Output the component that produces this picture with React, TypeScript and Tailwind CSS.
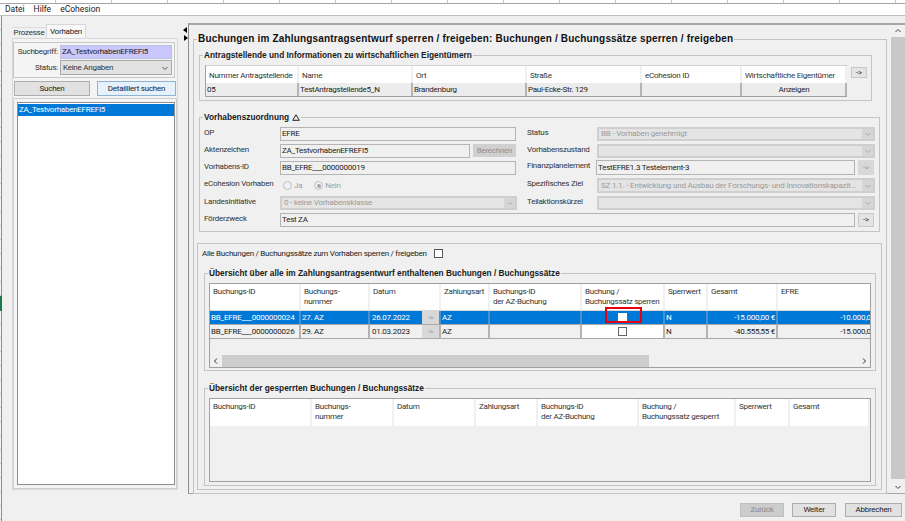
import type { ReactNode } from 'react'

const ticks = Array.from({ length: 17 })
const sideTicks = Array.from({ length: 36 })

const bookingCols = 'grid-cols-[91px_69px_71px_49px_92px_83px_43px_70px_103px]'
const lockedCols = 'grid-cols-[102px_82px_82px_62px_101px_97px_54px_80px]'

function Chevron({ dir = 'down', className = '' }: { dir?: 'down' | 'up' | 'left' | 'right'; className?: string }) {
  const d = {
    down: 'M1.5 3 L4 5.5 L6.5 3',
    up: 'M1.5 5 L4 2.5 L6.5 5',
    left: 'M5 1.5 L2.5 4 L5 6.5',
    right: 'M3 1.5 L5.5 4 L3 6.5',
  }[dir]
  return (
    <svg width="8" height="8" viewBox="0 0 8 8" className={`shrink-0 ${className}`}>
      <path d={d} fill="none" stroke="currentColor" strokeWidth="1" />
    </svg>
  )
}

function Box({
  legend,
  className = '',
  children,
}: {
  legend: ReactNode
  className?: string
  children: ReactNode
}) {
  return (
    <section className={`relative shrink-0 border border-[#c4c4c4] ${className}`}>
      <h3 className="absolute -top-[7px] left-[3px] whitespace-nowrap bg-[#f0f0f0] px-px font-['Liberation_Sans',Arial,sans-serif] text-[8.3px] font-bold leading-[12px] tracking-normal text-[#1a1a1a]">
        {legend}
      </h3>
      {children}
    </section>
  )
}

function Label({ children, className = 'w-[76px]' }: { children: ReactNode; className?: string }) {
  return <span className={`shrink-0 whitespace-nowrap leading-[11px] text-[#333] ${className}`}>{children}</span>
}

function Field({ value, className = '' }: { value?: string; className?: string }) {
  return (
    <div
      className={`flex items-center border border-[#b4b4b4] bg-[#f0f0f0] pl-[1px] leading-none text-[#222] ${className}`}
    >
      {value}
    </div>
  )
}

function Select({ value, className = '' }: { value?: string; className?: string }) {
  return (
    <div
      className={`flex items-center border-2 border-[#cfcfcf] bg-[#e4e4e4] leading-none text-[#9b9b9b] ${className}`}
    >
      <span className="min-w-0 flex-1 overflow-hidden whitespace-nowrap pl-[2px] tracking-[-0.18px]">{value}</span>
      <div className="flex h-full w-[11px] shrink-0 items-center justify-center bg-[#d6d6d6] text-[#aaa]">
        <Chevron />
      </div>
    </div>
  )
}

function ArrowButton({ className = '', disabled = false }: { className?: string; disabled?: boolean }) {
  return (
    <div
      className={`flex shrink-0 items-center justify-center border border-[#c8c8c8] leading-none ${
        disabled ? 'bg-[#d8d8d8] text-[#999]' : 'bg-[#e4e4e4] text-[#333]'
      } ${className}`}
    >
      -&gt;
    </div>
  )
}

function Radio({ checked = false, label }: { checked?: boolean; label: string }) {
  return (
    <span className="flex items-center gap-[2px] text-[#a0a0a0]">
      <span className="flex h-[9px] w-[9px] items-center justify-center rounded-full border border-[#c0c0c0] bg-[#f0f0f0]">
        {checked && <span className="h-[4px] w-[4px] rounded-full bg-[#a8a8a8]" />}
      </span>
      {label}
    </span>
  )
}

function HeadCell({ children, className = '' }: { children?: ReactNode; className?: string }) {
  return (
    <div
      className={`whitespace-pre border-r-2 border-[#f0f0f0] bg-white pl-[3px] pt-[3px] leading-[10px] text-[#333] ${className}`}
    >
      {children}
    </div>
  )
}

function RowCell({
  children,
  selected,
  className = '',
}: {
  children?: ReactNode
  selected: boolean
  className?: string
}) {
  return (
    <div
      className={`flex items-center overflow-hidden whitespace-nowrap border-r-2 pl-px leading-none ${
        selected ? 'border-[#4d8fcb] bg-[#0078d7] text-white' : 'border-[#b4b4b4] text-[#222]'
      } ${className}`}
    >
      {children}
    </div>
  )
}

function BookingRow({
  id,
  nr,
  date,
  total,
  efre,
  selected = false,
}: {
  id: string
  nr: string
  date: string
  total: string
  efre: string
  selected?: boolean
}) {
  return (
    <div className={`grid h-[14px] w-[671px] border-b border-[#a8a8a8] ${bookingCols}`}>
      <RowCell selected={selected} className="tracking-[-0.22px]">
        {id}
      </RowCell>
      <RowCell selected={selected}>{nr}</RowCell>
      <RowCell selected={selected} className="justify-between !pr-0">
        <span className="pl-[1px] pt-px">{date}</span>
        <ArrowButton disabled className="h-full w-[17px] !border-0" />
      </RowCell>
      <RowCell selected={selected}>AZ</RowCell>
      <RowCell selected={selected} />
      <div
        className={`relative flex items-center justify-center border-r-2 ${
          selected ? 'border-[#4d8fcb] bg-[#0078d7]' : 'border-[#b4b4b4] bg-white'
        }`}
      >
        <span className={`h-[9px] w-[9px] bg-white ${selected ? '' : 'border border-[#666]'}`} />
        {selected && <span className="absolute -top-[4px] left-[23px] h-[16px] w-[37px] border-2 border-[#e8000d]" />}
      </div>
      <RowCell selected={selected}>N</RowCell>
      <RowCell selected={selected} className="justify-end pr-[1px]">
        {total}
      </RowCell>
      <RowCell selected={selected} className="justify-end !border-r-0">
        {efre}
      </RowCell>
    </div>
  )
}

function DialogButton({ children, className = '' }: { children: ReactNode; className?: string }) {
  return (
    <div
      className={`flex h-[14px] items-center justify-center border border-[#adadad] bg-[#e1e1e1] leading-none text-[#222] ${className}`}
    >
      {children}
    </div>
  )
}

export default function App() {
  return (
    <div className="flex h-[521px] w-[905px] flex-col overflow-hidden bg-[#f0f0f0] font-['Roboto','Liberation_Sans',sans-serif] text-[8px] tracking-[-0.25px]">
      <div className="flex h-[4px] shrink-0 overflow-hidden border-b border-[#a6a6a6] bg-white">
        {ticks.map((_, i) => (
          <div key={i} className="h-full w-[56px] shrink-0 border-r border-[#c8c8c8]" />
        ))}
      </div>
      <nav className="flex h-[12px] shrink-0 items-center gap-[9px] border-b border-[#c0c0c0] bg-white pl-[5px] text-[8.5px] leading-none tracking-normal text-[#222]">
        <span>Datei</span>
        <span>Hilfe</span>
        <span>eCohesion</span>
      </nav>

      <div className="flex min-h-0 flex-1">
        <div className="relative flex h-full w-[2px] shrink-0 flex-col border-r border-[#8c8c8c] bg-[#f4f4f4]">
          {sideTicks.map((_, i) => (
            <div key={i} className="h-[14px] shrink-0 border-b border-[#c8c8c8]" />
          ))}
          <div className="absolute left-0 top-[280px] h-[15px] w-[2px] bg-[#1a7a4c]" />
        </div>

        <div className="flex min-w-0 flex-1 flex-col">
          <div className="flex h-[478px] shrink-0">
            {/* left pane */}
            <aside className="flex w-[180px] shrink-0 flex-col pl-[10px] pt-[9px]">
              <div className="flex h-[13px] shrink-0 items-end">
                <div className="flex h-[11px] w-[34px] items-center justify-center border-t border-[#ddd] bg-[#f0f0f0] leading-none text-[#333]">
                  Prozesse
                </div>
                <div className="flex h-[14px] w-[40px] items-center justify-center border-x border-t border-[#d8d8d8] bg-[#f8f8f8] leading-none text-[#222]">
                  Vorhaben
                </div>
              </div>
              <div className="flex h-[452px] w-[166px] flex-col border border-[#d8d8d8] bg-[#f4f4f4] pt-[3px]">
                <div className="flex h-[36px] w-[162px] shrink-0 flex-col gap-px border border-[#c8c8c8] py-[2px] pr-[2px]">
                  <div className="flex h-[14px] items-center">
                    <span className="w-[44px] text-right leading-none text-[#333]">Suchbegriff:</span>
                    <div className="ml-[2px] flex h-full flex-1 items-center border border-[#c0c0e0] bg-[#c9c7fb] pl-px leading-none text-[#222]">
                      ZA_TestvorhabenEFREFI5
                    </div>
                  </div>
                  <div className="flex h-[15px] items-center">
                    <span className="w-[44px] text-right leading-none text-[#333]">Status:</span>
                    <div className="ml-[2px] flex h-full flex-1 items-center justify-between border border-[#a8a8a8] bg-[#e1e1e1] px-[2px] leading-none text-[#333]">
                      Keine Angaben
                      <Chevron className="text-[#555]" />
                    </div>
                  </div>
                </div>
                <div className="mt-[3px] flex h-[15px] shrink-0 gap-[7px] pl-px">
                  <div className="flex w-[76px] items-center justify-center border border-[#adadad] bg-[#e1e1e1] leading-none text-[#222]">
                    Suchen
                  </div>
                  <div className="flex w-[79px] items-center justify-center border border-[#8fb4d0] bg-[#e5f1fb] leading-none text-[#222]">
                    Detailliert suchen
                  </div>
                </div>
                <div className="mt-[2px] flex h-[392px] w-[164px] flex-col border border-[#d0d0d0] p-[3px]">
                  <div className="flex h-full w-[158px] flex-col border border-[#8a8f96] bg-white pt-px">
                    <div className="flex h-[12px] items-center bg-[#0078d7] pl-px leading-none text-white">
                      ZA_TestvorhabenEFREFI5
                    </div>
                  </div>
                </div>
              </div>
            </aside>

            {/* splitter */}
            <div className="relative w-[6px] shrink-0">
              <span className="absolute left-[1px] top-[11px] h-0 w-0 border-y-[3px] border-r-[4px] border-y-transparent border-r-black" />
              <span className="absolute left-[2px] top-[19px] h-0 w-0 border-y-[3px] border-l-[4px] border-y-transparent border-l-black" />
            </div>

            {/* main frame */}
            <main className="mt-[7px] grid h-[471px] w-[717px] shrink-0 grid-cols-[702px_14px] border-b border-l border-t-2 border-[#a6a6a6] border-l-[#8c8c8c] bg-[#f0f0f0]">
              <div className="pl-[4px] pt-[14px]">
                <Box
                  className="h-[455px] w-[694px]"
                  legend={
                    <span className="text-[10px] tracking-[0.17px] text-[#111]">
                      Buchungen im Zahlungsantragsentwurf sperren / freigeben: Buchungen / Buchungssätze sperren / freigeben
                    </span>
                  }
                >
                  <Box
                    className="ml-[5px] mt-[15px] h-[46px] w-[673px]"
                    legend="Antragstellende und Informationen zu wirtschaftlichen Eigentümern"
                  >
                    <div className="ml-[5px] mt-[9px] flex items-start">
                      <div className="h-[32px] w-[642px] border border-[#a0a0a0] border-t-[#d0d0d0]">
                        <div className="grid h-[17px] grid-cols-[93px_114px_114px_115px_100px_105px] bg-white">
                          <HeadCell className="!pt-[5px]">Nummer Antragstellende</HeadCell>
                          <HeadCell className="!pt-[5px]">Name</HeadCell>
                          <HeadCell className="!pt-[5px]">Ort</HeadCell>
                          <HeadCell className="!pt-[5px]">Straße</HeadCell>
                          <HeadCell className="!pt-[5px]">eCohesion ID</HeadCell>
                          <HeadCell className="!pt-[5px]">Wirtschaftliche Eigentümer</HeadCell>
                        </div>
                        <div className="grid h-[13px] grid-cols-[93px_114px_114px_115px_100px_105px] bg-[#ececec]">
                          <RowCell selected={false}>05</RowCell>
                          <RowCell selected={false}>TestAntragstellende5_N</RowCell>
                          <RowCell selected={false}>Brandenburg</RowCell>
                          <RowCell selected={false}>Paul-Ecke-Str. 129</RowCell>
                          <RowCell selected={false} />
                          <RowCell selected={false} className="justify-center">
                            Anzeigen
                          </RowCell>
                        </div>
                      </div>
                      <ArrowButton className="ml-[4px] mt-[2px] h-[11px] w-[16px]" />
                    </div>
                  </Box>

                  <Box
                    className="ml-[5px] mt-[16px] h-[115px] w-[681px]"
                    legend={
                      <span className="flex items-center gap-[3px]">
                        Vorhabenszuordnung
                        <svg width="8" height="7" viewBox="0 0 8 7">
                          <path d="M4 .8 L7.3 6.3 H.7 Z" fill="none" stroke="#222" strokeWidth="1" />
                        </svg>
                      </span>
                    }
                  >
                    <div className="flex pl-[4px] pt-[9px]">
                      <div className="flex w-[323px] shrink-0 flex-col">
                        <div className="flex h-[14px] items-start">
                          <Label>OP</Label>
                          <Field value="EFRE" className="h-full w-[236px]" />
                        </div>
                        <div className="mt-[3px] flex h-[14px] items-start">
                          <Label>Aktenzeichen</Label>
                          <Field value="ZA_TestvorhabenEFREFI5" className="h-full w-[190px]" />
                          <div className="ml-[3px] flex h-[13px] w-[43px] items-center justify-center bg-[#d0d0d0] leading-none text-[#8f8f8f]">
                            Berechnen
                          </div>
                        </div>
                        <div className="mt-[3px] flex h-[14px] items-start">
                          <Label>Vorhabens-ID</Label>
                          <Field value="BB_EFRE___0000000019" className="h-full w-[236px]" />
                        </div>
                        <div className="mt-[3px] flex h-[14px] items-start">
                          <Label>eCohesion Vorhaben</Label>
                          <div className="flex items-center gap-[12px] pl-[3px] pt-[3px] leading-none">
                            <Radio label="Ja" />
                            <Radio checked label="Nein" />
                          </div>
                        </div>
                        <div className="mt-[4px] flex h-[14px] items-start">
                          <Label>Landesinitiative</Label>
                          <Select value="0 - keine Vorhabensklasse" className="h-full w-[237px]" />
                        </div>
                      </div>
                      <div className="flex flex-col">
                        <div className="flex h-[14px] items-start">
                          <Label className="w-[70px]">Status</Label>
                          <Select value="BB - Vorhaben genehmigt" className="h-full w-[278px]" />
                        </div>
                        <div className="mt-[3px] flex h-[14px] items-start">
                          <Label className="w-[70px]">Vorhabenszustand</Label>
                          <Select className="h-full w-[278px]" />
                        </div>
                        <div className="mt-[2px] flex h-[15px] items-start">
                          <Label className="w-[69px]">Finanzplanelement</Label>
                          <Field value="TestEFRE1.3 Testelement-3" className="h-full w-[259px]" />
                          <ArrowButton disabled className="ml-[3px] h-full w-[16px] !border-0" />
                        </div>
                        <div className="mt-[3px] flex h-[15px] items-start">
                          <Label className="w-[70px]">Spezifisches Ziel</Label>
                          <Select
                            value="SZ 1.1. - Entwicklung und Ausbau der Forschungs- und Innovationskapazit..."
                            className="h-full w-[278px]"
                          />
                        </div>
                        <div className="mt-[3px] flex h-[14px] items-start">
                          <Label className="w-[70px]">Teilaktionskürzel</Label>
                          <Select className="h-full w-[278px]" />
                        </div>
                      </div>
                    </div>
                    <div className="mt-[3px] flex h-[14px] items-start pl-[4px]">
                      <Label>Förderzweck</Label>
                      <Field value="Test ZA" className="h-full w-[575px]" />
                      <ArrowButton className="ml-[3px] h-full w-[16px]" />
                    </div>
                  </Box>

                  <section className="ml-[3px] mt-[11px] h-[247px] w-[685px] border border-[#c4c4c4]">
                    <div className="mt-[3px] flex h-[13px] items-center pl-[4px] leading-none text-[#222]">
                      Alle Buchungen / Buchungssätze zum Vorhaben sperren / freigeben
                      <span className="ml-[7px] h-[9px] w-[9px] border border-[#555] bg-white" />
                    </div>

                    <Box
                      className="ml-[6px] mt-[13px] h-[98px] w-[672px]"
                      legend="Übersicht über alle im Zahlungsantragsentwurf enthaltenen Buchungen / Buchungssätze"
                    >
                      <div className="ml-[4px] mt-[9px] flex h-[85px] w-[662px] flex-col overflow-hidden border border-[#a0a0a0]">
                        <div className={`grid h-[27px] w-[671px] shrink-0 border-b border-[#d8d8d8] ${bookingCols}`}>
                          <HeadCell>Buchungs-ID</HeadCell>
                          <HeadCell>{'Buchungs-\nnummer'}</HeadCell>
                          <HeadCell>Datum</HeadCell>
                          <HeadCell>Zahlungsart</HeadCell>
                          <HeadCell>{'Buchungs-ID\nder AZ-Buchung'}</HeadCell>
                          <HeadCell>{'Buchung /\nBuchungssatz sperren'}</HeadCell>
                          <HeadCell>Sperrwert</HeadCell>
                          <HeadCell>Gesamt</HeadCell>
                          <HeadCell>EFRE</HeadCell>
                        </div>
                        <BookingRow
                          selected
                          id="BB_EFRE___0000000024"
                          nr="27. AZ"
                          date="26.07.2022"
                          total="-15.000,00 €"
                          efre="-10.000,00 €"
                        />
                        <BookingRow
                          id="BB_EFRE___0000000026"
                          nr="29. AZ"
                          date="01.03.2023"
                          total="-40.555,55 €"
                          efre="-15.000,00 €"
                        />
                        <div className="mt-auto flex h-[12px] shrink-0 items-center bg-[#f0f0f0] pl-[2px] pr-[2px] text-[#333]">
                          <Chevron dir="left" />
                          <div className="ml-[2px] flex h-full flex-1">
                            <div className="h-full w-[427px] bg-[#cdcdcd]" />
                          </div>
                          <Chevron dir="right" />
                        </div>
                      </div>
                    </Box>

                    <Box
                      className="ml-[6px] mt-[17px] h-[98px] w-[672px]"
                      legend="Übersicht der gesperrten Buchungen / Buchungssätze"
                    >
                      <div className="ml-[4px] mt-[9px] h-[84px] w-[662px] border border-[#a0a0a0]">
                        <div className={`grid h-[27px] ${lockedCols}`}>
                          <HeadCell>Buchungs-ID</HeadCell>
                          <HeadCell>{'Buchungs-\nnummer'}</HeadCell>
                          <HeadCell>Datum</HeadCell>
                          <HeadCell>Zahlungsart</HeadCell>
                          <HeadCell>{'Buchungs-ID\nder AZ-Buchung'}</HeadCell>
                          <HeadCell>{'Buchung /\nBuchungssatz gesperrt'}</HeadCell>
                          <HeadCell>Sperrwert</HeadCell>
                          <HeadCell>Gesamt</HeadCell>
                        </div>
                      </div>
                    </Box>
                  </section>
                </Box>
              </div>

              {/* vertical scrollbar */}
              <div className="flex h-[468px] flex-col bg-[#f0f0f0] text-[#444]">
                <div className="flex h-[12px] shrink-0 items-center justify-center">
                  <Chevron dir="up" />
                </div>
                <div className="h-[442px] w-[14px] shrink-0 bg-[#c8c8c8]" />
                <div className="mt-auto flex h-[13px] shrink-0 items-center justify-center">
                  <Chevron />
                </div>
              </div>
            </main>
          </div>

          <footer className="mt-[9px] flex justify-end gap-[8px] pr-[3px]">
            <DialogButton className="w-[44px] !border-[#bfbfbf] !bg-[#cccccc] !text-[#8a8a8a]">Zurück</DialogButton>
            <DialogButton className="w-[44px]">Weiter</DialogButton>
            <DialogButton className="ml-px w-[57px]">Abbrechen</DialogButton>
          </footer>
        </div>
      </div>
    </div>
  )
}
